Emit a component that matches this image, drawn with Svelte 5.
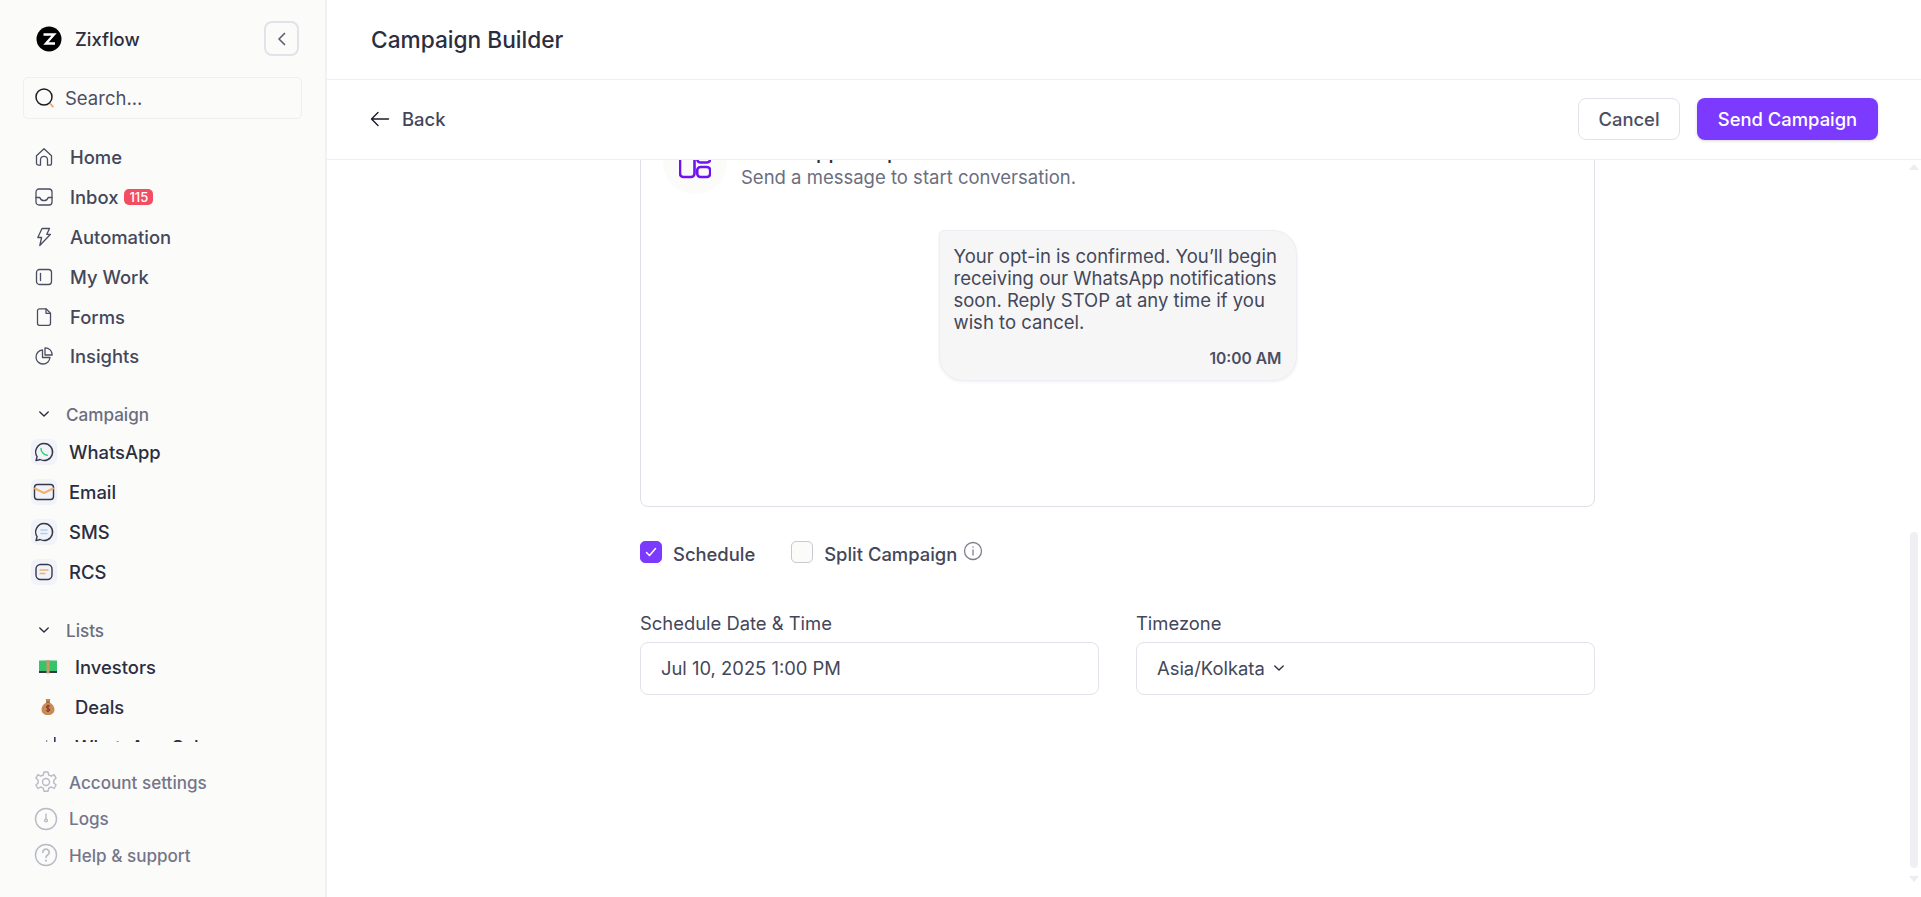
<script>
	const mainNav = [
		{ label: 'Home', icon: 'home' },
		{ label: 'Inbox', icon: 'inbox', badge: '115' },
		{ label: 'Automation', icon: 'bolt' },
		{ label: 'My Work', icon: 'work' },
		{ label: 'Forms', icon: 'file' },
		{ label: 'Insights', icon: 'pie' }
	];
	const channels = ['WhatsApp', 'Email', 'SMS', 'RCS'];
</script>

{#snippet chevronDown()}
	<svg class="caret" width="12" height="12" viewBox="0 0 12 12" fill="none" stroke="#2b2e3f" stroke-width="1.4" stroke-linecap="round" stroke-linejoin="round"><path d="M1.800 4 6 8l4.200-4" /></svg>
{/snippet}

{#snippet navIcon(name)}
	<svg width="20" height="20" viewBox="0 0 20 20" fill="none" stroke="#4b4e63" stroke-width="1.3" stroke-linecap="round" stroke-linejoin="round">
		{#if name === 'home'}
			<path d="M2.500 8.800 10 1.800l7.500 7v7.400a2 2 0 0 1-2 2h-2v-5.400a3.500 3.500 0 0 0-7 0v5.400h-2a2 2 0 0 1-2-2z" />
		{:else if name === 'inbox'}
			<rect x="2" y="2" width="16" height="16" rx="3" />
			<path d="M2 10.500h3.800c.7 2.200 2.200 3.200 4.200 3.200s3.500-1 4.200-3.200H18" />
		{:else if name === 'bolt'}
			<path d="M8 1.500h7.500l-2.700 5.800h3.700L5.800 18.500l1.800-8H3.800z" />
		{:else if name === 'work'}
			<rect x="2.500" y="2.500" width="15" height="15" rx="3" />
			<path d="M6.500 6.500v7" />
		{:else if name === 'file'}
			<path d="M5.500 1.800h6.500l4.500 4.500v10a2 2 0 0 1-2 2h-9a2 2 0 0 1-2-2v-12.500a2 2 0 0 1 2-2z" />
			<path d="M12 1.800v4.500h4.500" />
		{:else}
			<path d="M8.500 4a7 7 0 1 0 7.500 7.500H8.500z" />
			<path d="M11 1.800a7 7 0 0 1 7.200 7.200H11z" />
		{/if}
	</svg>
{/snippet}

{#snippet channelIcon(name)}
	<span class="channel-icon">
		<svg width="22" height="22" viewBox="0 0 22 22" fill="none" stroke="#35384b" stroke-width="1.4" stroke-linecap="round" stroke-linejoin="round">
			{#if name === 'WhatsApp'}
				<path d="M11 2.500a8.500 8.500 0 1 1-3.900 16L3 19.600l1.100-3.900A8.500 8.500 0 0 1 11 2.500z" />
				<path d="M8 7.500c0 3.500 2.800 6.500 6.300 6.800" stroke="#2ecc71" />
			{:else if name === 'Email'}
				<rect x="1.500" y="3.500" width="19" height="15" rx="3" />
				<path d="M2 7.500 11 12l9-4.500" stroke="#f2b06f" stroke-width="2" />
			{:else if name === 'SMS'}
				<path d="M11 2.500a8.500 8.500 0 1 1-3.900 16L3 19.600l1.100-3.900A8.500 8.500 0 0 1 11 2.500z" />
				<path d="M8 9h6M8 12.500h6" stroke="#a9cdf3" stroke-dasharray="1.600 1.200" />
			{:else}
				<rect x="3" y="3.500" width="16" height="15" rx="4.500" />
				<path d="M7 9h8M7 12.500h5" stroke="#f2b06f" />
			{/if}
		</svg>
	</span>
{/snippet}

<div class="app">
	<aside class="sidebar">
		<div class="brand">
			<div class="brand-name">
				<svg width="26" height="26" viewBox="0 0 26 26" fill="none"><circle cx="13" cy="13" r="12.500" fill="#000" /><path d="M7.500 8.500h10.500l-8 9h9" stroke="#fff" stroke-width="2.400" stroke-linejoin="miter" /></svg>
				<span>Zixflow</span>
			</div>
			<button class="collapse" aria-label="Collapse">
				<svg width="14" height="14" viewBox="0 0 14 14" fill="none" stroke="#5e6172" stroke-width="1.700" stroke-linecap="round" stroke-linejoin="round"><path d="M9.500 1.500 4 7l5.500 5.500" /></svg>
			</button>
		</div>

		<div class="search">
			<svg width="22" height="22" viewBox="0 0 22 22" fill="none" stroke-linecap="round"><circle cx="10" cy="10" r="8" stroke="#1c1c28" stroke-width="1.500" /><path d="M16.500 17l2.400 2.600" stroke="#ef9f58" stroke-width="1.600" /></svg>
			<span>Search...</span>
		</div>

		<nav class="main-nav">
			{#each mainNav as item}
				<div class="nav-item">
					{@render navIcon(item.icon)}
					<span>{item.label}</span>
					{#if item.badge}<span class="badge">{item.badge}</span>{/if}
				</div>
			{/each}
		</nav>

		<div class="scroll">
			<div class="section-title">{@render chevronDown()}<span>Campaign</span></div>
			{#each channels as c}
				<div class="channel">
					{@render channelIcon(c)}
					<span>{c}</span>
				</div>
			{/each}

			<div class="section-title lists">{@render chevronDown()}<span>Lists</span></div>
			<div class="list-item">
				<svg class="emoji" width="20" height="20" viewBox="0 0 20 20"><rect x="1" y="3.500" width="18" height="12" fill="#37c26b" /><rect x="1" y="14" width="18" height="2" fill="#35384b" /><rect x="8.500" y="3" width="3" height="13.500" fill="#c99a63" /></svg>
				<span>Investors</span>
			</div>
			<div class="list-item">
				<svg class="emoji" width="20" height="20" viewBox="0 0 20 20"><path d="M7.500 2h5l-1.200 3.200c3.400 1.600 5.200 4.400 5.200 7.300 0 3.600-2.600 5.500-6.500 5.500s-6.500-1.900-6.500-5.500c0-2.900 1.800-5.700 5.200-7.300z" fill="#c98a55" /><path d="M8 5h4" stroke="#8b5a33" stroke-width="1.200" /><path d="M12 9.200c-1.600-.9-3.600-.5-3.600.8 0 1.800 3.400 1 3.400 2.900 0 1.400-2.100 1.600-3.600.8M10 7.800v7" stroke="#7a2e2e" stroke-width="1" fill="none" /></svg>
				<span>Deals</span>
			</div>
			<div class="list-item">
				<svg class="emoji" width="20" height="20" viewBox="0 0 20 20"><rect x="16" y="0" width="1.600" height="10" fill="#2b3a67" /><rect x="8" y="3" width="1.200" height="8" fill="#7f8bb0" /></svg>
				<span>WhatsApp Sales</span>
			</div>
		</div>

		<div class="footer-nav">
			<div class="foot-item">
				<svg width="24" height="24" viewBox="0 0 24 24" fill="none" stroke="#b8bac6" stroke-width="1.400" stroke-linejoin="round"><circle cx="12" cy="12" r="3.500" /><path d="M10 2h4l.7 3 2.700 1.200 2.700-1.500 2 3.400-2.300 2.100v2.800l2.300 2-2 3.500-2.700-1.500-2.700 1.200-.7 3h-4l-.7-3-2.700-1.200-2.700 1.500-2-3.500 2.300-2v-2.800L1.900 8.100l2-3.400 2.700 1.500 2.700-1.200z" /></svg>
				<span>Account settings</span>
			</div>
			<div class="foot-item">
				<svg width="24" height="24" viewBox="0 0 24 24" fill="none" stroke="#b8bac6" stroke-width="1.400" stroke-linecap="round"><circle cx="12" cy="12" r="10.500" /><circle cx="12" cy="13.500" r="1.400" /><path d="M12 12V7" /></svg>
				<span>Logs</span>
			</div>
			<div class="foot-item">
				<svg width="24" height="24" viewBox="0 0 24 24" fill="none" stroke="#b8bac6" stroke-width="1.400" stroke-linecap="round"><circle cx="12" cy="12" r="10.500" /><path d="M8.800 9.300a3.200 3.200 0 1 1 4.900 2.700c-1 .6-1.700 1.200-1.700 2.300" stroke-width="1.700" /><path d="M12 17.500v.2" stroke-width="2" /></svg>
				<span>Help &amp; support</span>
			</div>
		</div>
	</aside>

	<main class="main">
		<header class="topbar"><h1>Campaign Builder</h1></header>
		<div class="toolbar">
			<div class="back">
				<svg width="20" height="20" viewBox="0 0 20 20" fill="none" stroke="#1c1c28" stroke-width="1.400" stroke-linecap="round" stroke-linejoin="round"><path d="M18.500 10H1.500M8 3.500 1.500 10 8 16.500" /></svg>
				<span>Back</span>
			</div>
			<div class="actions">
				<button class="cancel">Cancel</button>
				<button class="send">Send Campaign</button>
			</div>
		</div>

		<div class="content">
			<div class="form">
				<div class="preview">
					<div class="preview-head">
						<div class="avatar">
							<svg width="32" height="40" viewBox="0 0 32 40" fill="none" stroke="#6f14ef" stroke-width="2.600" stroke-linejoin="round"><rect x="1" y="9" width="14.500" height="26" rx="3.500" /><rect x="18.200" y="12" width="13" height="8.500" rx="3.500" /><rect x="18.200" y="25" width="13" height="10" rx="3.500" /></svg>
						</div>
						<div>
							<div class="head-title">WhatsApp Template</div>
							<div class="head-sub">Send a message to start conversation.</div>
						</div>
					</div>
					<div class="bubble">
						<p>Your opt-in is confirmed. You’ll begin receiving our WhatsApp notifications soon. Reply STOP at any time if you wish to cancel.</p>
						<div class="time">10:00 AM</div>
					</div>
				</div>

				<div class="checks">
					<label class="check">
						<span class="box on">
							<svg width="14" height="14" viewBox="0 0 14 14" fill="none" stroke="#fff" stroke-width="1.500" stroke-linecap="round" stroke-linejoin="round"><path d="M2.500 7.500 5.500 10.500 11.500 3.500" /></svg>
						</span>
						<span class="check-text">Schedule</span>
					</label>
					<label class="check">
						<span class="box"></span>
						<span class="check-text">Split Campaign</span>
						<svg class="info" width="20" height="20" viewBox="0 0 20 20" fill="none" stroke="#7d7f8d" stroke-width="1.300" stroke-linecap="round"><circle cx="10" cy="10" r="8.500" /><path d="M10 9v5M10 6v.2" /></svg>
					</label>
				</div>

				<div class="fields">
					<div class="field">
						<div class="label">Schedule Date &amp; Time</div>
						<div class="input">Jul 10, 2025 1:00 PM</div>
					</div>
					<div class="field">
						<div class="label">Timezone</div>
						<div class="input tz">Asia/Kolkata {@render chevronDown()}</div>
					</div>
				</div>
			</div>

			<div class="scrollbar">
				<span class="arrow up"></span>
				<span class="track"><span class="thumb"></span></span>
				<span class="arrow down"></span>
			</div>
		</div>
	</main>
</div>

<style>
	:global(body) {
		margin: 0;
		font-family: Inter, 'Liberation Sans', sans-serif;
		color: #2b2e3f;
		background: #fff;
	}

	.app {
		display: flex;
		width: 100%;
		height: 897px;
		overflow: hidden;
	}

	.sidebar {
		width: 327px;
		flex: none;
		box-sizing: border-box;
		height: 897px;
		background: #fbfbfa;
		border-right: 2px solid #f1f1f4;
		padding: 0 23px;
		display: flex;
		flex-direction: column;
	}

	.brand {
		display: flex;
		align-items: center;
		justify-content: space-between;
		height: 77px;
		flex: none;
		padding: 0 3px 0 13px;
	}

	.brand-name {
		display: flex;
		align-items: center;
		gap: 13px;
		font-size: 18.4px;
		font-weight: 500;
		color: #2b2e3f;
	}

	.collapse {
		width: 35px;
		height: 35px;
		padding: 0;
		display: flex;
		align-items: center;
		justify-content: center;
		background: #fbfbfa;
		border: 2px solid #e2e2ea;
		border-radius: 8px;
	}

	.search {
		height: 42px;
		flex: none;
		box-sizing: border-box;
		border: 1px solid #eeeef3;
		border-radius: 5px;
		display: flex;
		align-items: center;
		gap: 9px;
		padding: 0 10px;
		font-size: 18.5px;
		color: #4b4e63;
	}

	.main-nav {
		margin-top: 18px;
		flex: none;
	}

	.nav-item {
		height: 39.9px;
		display: flex;
		align-items: center;
		gap: 16px;
		padding-left: 11px;
		font-size: 18.4px;
		font-weight: 500;
		color: #44475a;
	}

	.badge {
		margin-left: -10px;
		background: #f44c60;
		color: #fff;
		font-size: 13px;
		font-weight: 500;
		line-height: 16px;
		padding: 0 5px;
		border-radius: 5px;
	}

	.scroll {
		height: 345px;
		overflow: hidden;
		margin-top: 20.5px;
		flex: none;
	}

	.section-title {
		display: flex;
		align-items: center;
		gap: 16px;
		height: 35px;
		padding-left: 15px;
		font-size: 17.1px;
		font-weight: 500;
		color: #6b6e80;
	}

	.section-title.lists {
		margin-top: 20.7px;
		height: 35px;
	}

	.caret {
		flex: none;
	}

	.channel {
		height: 40px;
		display: flex;
		align-items: center;
		gap: 12px;
		padding-left: 8px;
		font-size: 18.4px;
		font-weight: 500;
		color: #2b2e3f;
	}

	.channel-icon {
		width: 26px;
		height: 26px;
		border-radius: 6px;
		background: #f1f3f9;
		display: flex;
		align-items: center;
		justify-content: center;
	}

	.list-item {
		height: 39.8px;
		display: flex;
		align-items: center;
		gap: 17px;
		padding-left: 15px;
		font-size: 18.4px;
		font-weight: 500;
		color: #2b2e3f;
	}

	.emoji {
		flex: none;
	}

	.footer-nav {
		margin-top: 22.4px;
		flex: none;
	}

	.foot-item {
		height: 36.5px;
		display: flex;
		align-items: center;
		gap: 11px;
		padding-left: 11px;
		font-size: 17.1px;
		font-weight: 500;
		color: #74768a;
	}

	.main {
		flex: 1;
		min-width: 0;
		display: flex;
		flex-direction: column;
		height: 897px;
	}

	.topbar {
		height: 79px;
		flex: none;
		display: flex;
		align-items: center;
		padding: 0 44px;
		border-bottom: 1px solid #f0f0f4;
	}

	h1 {
		margin: 0;
		font-size: 22.7px;
		font-weight: 500;
		color: #2b2e3f;
	}

	.toolbar {
		height: 77px;
		flex: none;
		display: flex;
		align-items: center;
		justify-content: space-between;
		padding: 0 43px 2px;
		border-bottom: 1px solid #f0f0f4;
	}

	.back {
		display: flex;
		align-items: center;
		gap: 12px;
		font-size: 18.4px;
		font-weight: 500;
		color: #44475a;
	}

	.actions {
		display: flex;
		gap: 17px;
	}

	button {
		font-family: inherit;
	}

	.cancel {
		height: 42px;
		width: 102px;
		background: #fff;
		border: 1px solid #e2e2ea;
		border-radius: 8px;
		font-size: 18.4px;
		font-weight: 500;
		color: #4b4e63;
	}

	.send {
		height: 42px;
		width: 181px;
		background: #7c3aff;
		border: none;
		border-radius: 8px;
		box-shadow: 0 1px 3px rgba(60, 60, 90, 0.2);
		font-size: 18.4px;
		font-weight: 500;
		color: #fff;
	}

	.content {
		flex: 1;
		min-height: 0;
		overflow: hidden;
		position: relative;
		padding-right: 13px;
	}

	.form {
		width: 955px;
		margin: 0 auto;
	}

	.preview {
		box-sizing: border-box;
		height: 507px;
		margin-top: -160px;
		border: 1px solid #dfdfe8;
		border-radius: 8px;
		padding: 129px 22px 0;
	}

	.preview-head {
		display: flex;
		gap: 14px;
	}

	.avatar {
		width: 64px;
		height: 64px;
		border-radius: 50%;
		background: #fbfbfa;
		display: flex;
		align-items: center;
		justify-content: center;
		flex: none;
	}

	.head-title {
		font-size: 20px;
		font-weight: 500;
		line-height: 26px;
		padding-top: 9px;
	}

	.head-sub {
		font-size: 18.5px;
		line-height: 24px;
		color: #6b6e80;
	}

	.bubble {
		box-sizing: border-box;
		width: 358px;
		height: 151px;
		margin: 36px auto 0;
		background: #f6f6f7;
		border: 1px solid #eeeef4;
		border-radius: 5px 24px 24px 24px;
		padding: 14px 14px;
		box-shadow: 0 1px 3px rgba(60, 60, 90, 0.08);
		font-size: 18.5px;
		line-height: 22px;
		color: #44475a;
	}

	.bubble p {
		margin: 0;
	}

	.time {
		margin-top: 15px;
		text-align: right;
		font-size: 15.6px;
		font-weight: 600;
		color: #4b4e63;
	}

	.checks {
		display: flex;
		gap: 36px;
		margin-top: 32.5px;
	}

	.check {
		display: flex;
		align-items: center;
		gap: 11px;
		font-size: 18.4px;
		font-weight: 500;
		color: #44475a;
	}

	.check-text {
		padding-top: 3px;
	}

	.box {
		box-sizing: border-box;
		width: 22px;
		height: 22px;
		border: 1px solid #c9c9d3;
		border-radius: 5px;
		background: #fbfbfa;
		display: flex;
		align-items: center;
		justify-content: center;
	}

	.box.on {
		background: #7c3aff;
		border-color: #7c3aff;
	}

	.info {
		margin: -3px 0 0 -5px;
	}

	.fields {
		display: flex;
		gap: 37px;
		margin-top: 46px;
	}

	.field {
		flex: 1;
	}

	.label {
		font-size: 18.4px;
		line-height: 24px;
		color: #44475a;
		margin-bottom: 7px;
	}

	.input {
		box-sizing: border-box;
		height: 53px;
		border: 1px solid #e2e2ea;
		border-radius: 8px;
		padding: 0 20px;
		display: flex;
		align-items: center;
		gap: 8px;
		font-size: 18.4px;
		color: #44475a;
	}

	.scrollbar {
		position: absolute;
		right: 1px;
		top: 0;
		bottom: 0;
		width: 12px;
		display: flex;
		flex-direction: column;
		align-items: center;
	}

	.track {
		flex: 1;
		position: relative;
		width: 8px;
	}

	.thumb {
		position: absolute;
		left: 0;
		right: 0;
		top: 362px;
		height: 336px;
		background: #f0f0f4;
		border-radius: 4px;
	}

	.arrow {
		width: 0;
		height: 0;
		border-left: 5px solid transparent;
		border-right: 5px solid transparent;
	}

	.arrow.up {
		margin-top: 4px;
		border-bottom: 6px solid #ecedf1;
	}

	.arrow.down {
		margin-bottom: 15px;
		border-top: 6px solid #ecedf1;
	}
</style>
